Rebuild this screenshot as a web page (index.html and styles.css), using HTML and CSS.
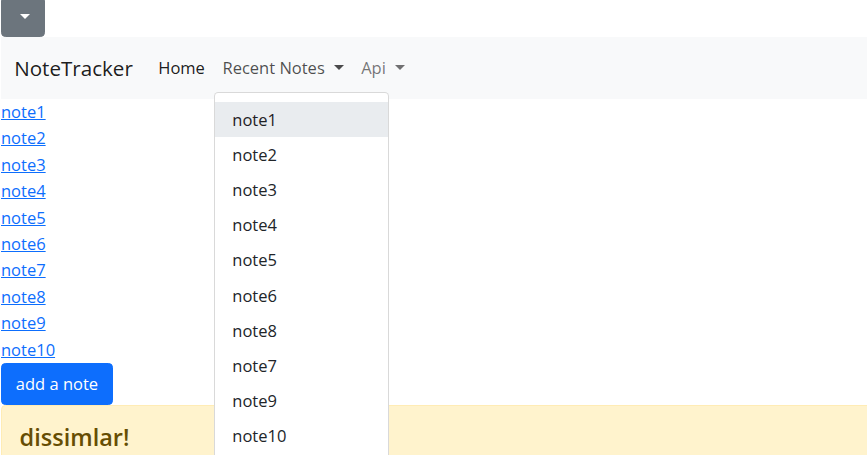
FILE: index.html
```html
<!DOCTYPE html>
<html lang="en">
<head>
<meta charset="utf-8">
<title>NoteTracker</title>
<link rel="stylesheet" href="styles.css">
</head>
<body>
<div class="top-bar">
  <button class="btn btn-secondary dropdown-toggle caret-only" type="button"></button>
</div>
<nav class="navbar">
  <div class="navbar-inner">
    <a class="navbar-brand" href="#">NoteTracker</a>
    <ul class="navbar-nav">
      <li class="nav-item"><a class="nav-link active" href="#">Home</a></li>
      <li class="nav-item dropdown">
        <a class="nav-link hovered dropdown-toggle" href="#">Recent Notes </a>
        <ul class="dropdown-menu">
          <li><a class="dropdown-item is-hover" href="#">note1</a></li>
          <li><a class="dropdown-item" href="#">note2</a></li>
          <li><a class="dropdown-item" href="#">note3</a></li>
          <li><a class="dropdown-item" href="#">note4</a></li>
          <li><a class="dropdown-item" href="#">note5</a></li>
          <li><a class="dropdown-item" href="#">note6</a></li>
          <li><a class="dropdown-item" href="#">note8</a></li>
          <li><a class="dropdown-item" href="#">note7</a></li>
          <li><a class="dropdown-item" href="#">note9</a></li>
          <li><a class="dropdown-item" href="#">note10</a></li>
        </ul>
      </li>
      <li class="nav-item"><a class="nav-link dropdown-toggle" href="#">Api </a></li>
    </ul>
  </div>
</nav>
<main class="content">
  <div class="note-links">
    <div><a href="#">note1</a></div>
    <div><a href="#">note2</a></div>
    <div><a href="#">note3</a></div>
    <div><a href="#">note4</a></div>
    <div><a href="#">note5</a></div>
    <div><a href="#">note6</a></div>
    <div><a href="#">note7</a></div>
    <div><a href="#">note8</a></div>
    <div><a href="#">note9</a></div>
    <div><a href="#">note10</a></div>
  </div>
  <button class="btn btn-primary" type="button">add a note</button>
  <div class="alert alert-warning">
    <h4 class="alert-heading">dissimlar!</h4>
  </div>
</main>
</body>
</html>
```
FILE: styles.css
```css
html, body {
  overflow: hidden;
}
body {
  margin: -4.4px 0 0 0;
  padding: 0 0 0 1px;
  font-family: "Open Sans", "Noto Sans", sans-serif;
  font-size: 16.5px;
  line-height: 26.4px;
  color: #212529;
  background: #fff;
}
ul {
  list-style: none;
  margin: 0;
  padding: 0;
}
a {
  color: #0d6efd;
  text-decoration: underline;
}

.btn {
  display: inline-block;
  font-family: inherit;
  font-size: 16.5px;
  line-height: 26.4px;
  padding: 6.6px 13.2px;
  border: 1.1px solid transparent;
  border-radius: 4.4px;
  cursor: pointer;
  vertical-align: middle;
}
.btn-secondary {
  background: #6c757d;
  border-color: #6c757d;
  color: #fff;
}
.btn-primary {
  background: #0d6efd;
  border-color: #0d6efd;
  color: #fff;
  display: block;
  width: 112px;
  padding-left: 0;
  padding-right: 0;
  text-align: center;
}
.top-bar {
  display: flex;
}
.caret-only {
  height: 41.8px;
  width: 43.7px;
  padding: 0;
  display: flex;
  align-items: center;
  justify-content: center;
}
.dropdown-toggle::after {
  content: "";
  display: inline-block;
  width: 0;
  height: 0;
  margin-left: 4.5px;
  vertical-align: 4.5px;
  border-top: 5.3px solid;
  border-right: 5.3px solid transparent;
  border-left: 5.3px solid transparent;
  border-bottom: 0;
}
.caret-only::after {
  margin-left: 4.5px;
  vertical-align: 0;
  margin-top: 0;
}

.navbar {
  background: #f8f9fa;
  padding: 8.8px 0;
}
.navbar-inner {
  display: flex;
  align-items: center;
  padding: 0 13.2px;
}
.navbar-brand {
  font-size: 20.6px;
  line-height: 33px;
  padding: 5.5px 0;
  margin-right: 16.6px;
  color: rgba(0, 0, 0, 0.9);
  text-decoration: none;
}
.navbar-nav {
  display: flex;
}
.nav-item {
  position: relative;
}
.nav-link {
  display: block;
  padding: 8.8px;
  color: rgba(0, 0, 0, 0.55);
  text-decoration: none;
  white-space: pre;
}
.nav-link.active {
  color: rgba(0, 0, 0, 0.9);
}
.nav-link.hovered {
  color: rgba(0, 0, 0, 0.7);
}

.dropdown-menu {
  position: absolute;
  top: 100%;
  left: 0;
  margin-top: 2.2px;
  min-width: 175px;
  box-sizing: border-box;
  padding: 8.8px 0;
  background: #fff;
  border: 1.1px solid rgba(0, 0, 0, 0.15);
  border-radius: 4.4px;
  z-index: 10;
}
.dropdown-item {
  display: block;
  padding: 4.4px 17.6px;
  color: #212529;
  text-decoration: none;
  white-space: nowrap;
}
.dropdown-item.is-hover {
  background: #e9ecef;
  color: #1e2125;
}

.note-links a {
  color: #0d6efd;
}

.alert {
  padding: 17.6px;
  margin: 0 -6px 17.6px 0;
  border: 1.1px solid transparent;
  border-radius: 4.4px;
}
.alert-warning {
  background: #fff3cd;
  border-color: #ffecb5;
  color: #664d03;
}
.alert-heading {
  margin: 0 0 8.8px 0;
  font-size: 23.5px;
  font-weight: 600;
  line-height: 1.2;
  color: inherit;
}
```
